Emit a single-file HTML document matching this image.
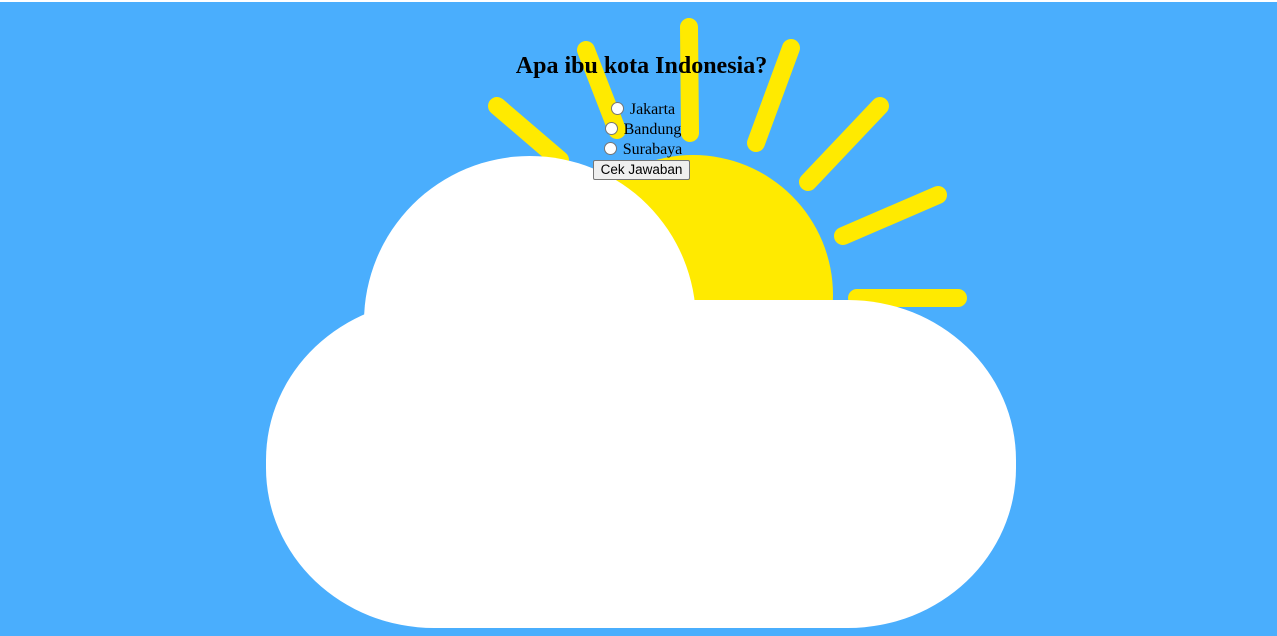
<!DOCTYPE html>
<html><head><meta charset="utf-8"><style>
html,body{margin:0;padding:0;width:1277px;height:636px;overflow:hidden;background:#4aaefd;}
.top{position:absolute;left:0;top:0;width:1277px;height:2px;background:#fff;}
svg{position:absolute;left:0;top:0;}
.c{position:absolute;left:3px;top:0;width:1277px;text-align:center;font-family:"Liberation Serif",serif;font-size:16px;color:#000;}
h2{margin:0;position:absolute;top:52px;width:100%;font-size:24px;font-weight:bold;line-height:28px;}
.opts{position:absolute;top:100px;width:100%;line-height:20px;}
.opts div{height:20px;}
.r{display:inline-block;width:11px;height:11px;border:1px solid #767676;border-radius:50%;background:#fff;vertical-align:-1px;margin:0 6px 0 3px;}
button{font-family:"Liberation Sans",sans-serif;font-size:13.5px;padding:1px 7px;border:1px solid #767676;border-radius:2px;background:#efefef;height:20px;line-height:16px;}
</style></head><body>
<div class="top"></div>
<svg width="1277" height="636">
<g stroke="#ffea00" stroke-width="18" stroke-linecap="round">
<line x1="497" y1="106" x2="560" y2="160"/>
<line x1="586" y1="50" x2="617" y2="130"/>
<line x1="689" y1="27" x2="690" y2="133"/>
<line x1="791" y1="48" x2="756" y2="143"/>
<line x1="880" y1="106" x2="808" y2="182"/>
<line x1="938" y1="195" x2="843" y2="236"/>
<line x1="958" y1="298" x2="857" y2="298"/>
</g>
<circle cx="693" cy="295" r="140" fill="#ffea00"/>
<g fill="#fff">
<circle cx="530" cy="322" r="166"/>
<rect x="266" y="300" width="750" height="328" rx="168" ry="160"/>
</g>
</svg>
<div class="c">
<h2>Apa ibu kota Indonesia?</h2>
<div class="opts">
<div><span class="r"></span>Jakarta</div>
<div><span class="r"></span>Bandung</div>
<div><span class="r"></span>Surabaya</div>
<div><button>Cek Jawaban</button></div>
</div>
</div>
</body></html>
